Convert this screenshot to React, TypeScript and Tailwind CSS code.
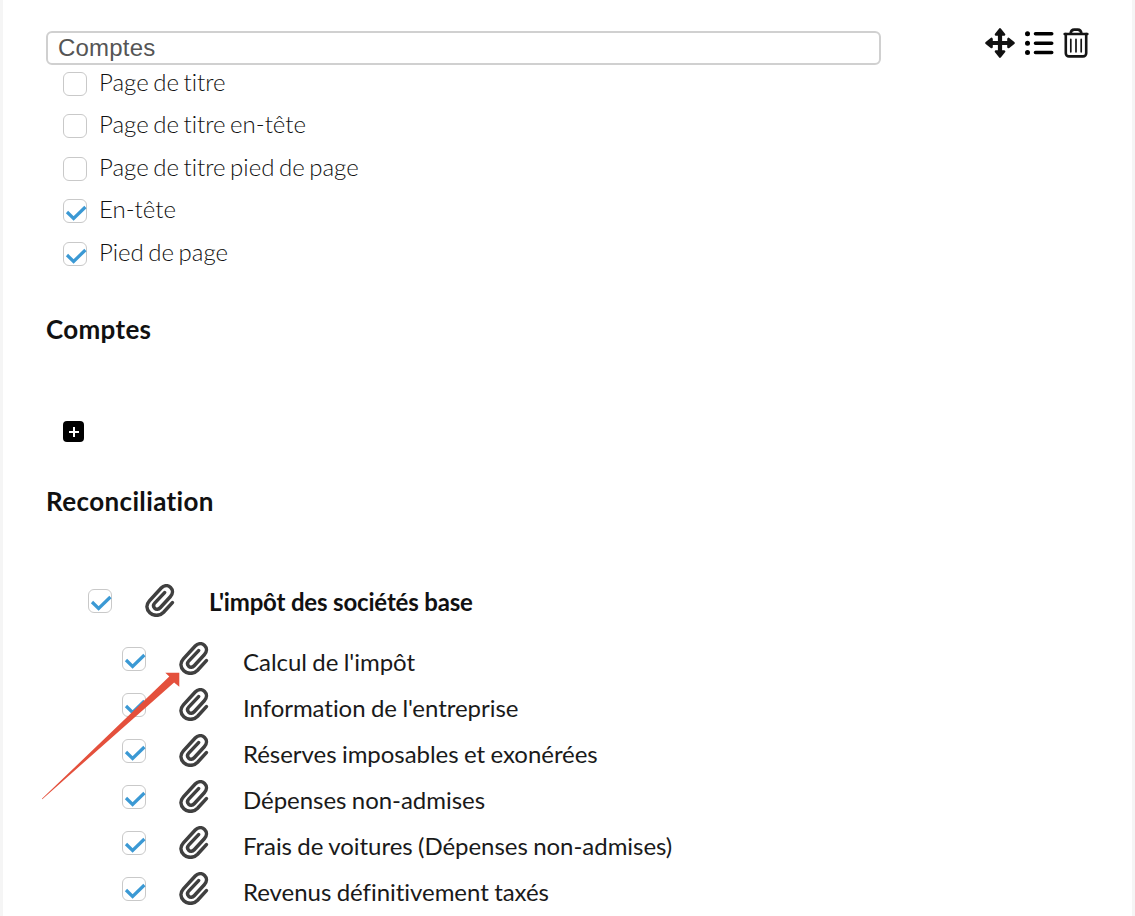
import clsx from "clsx"

const pageOptions = [
  { label: "Page de titre", checked: false },
  { label: "Page de titre en-tête", checked: false },
  { label: "Page de titre pied de page", checked: false },
  { label: "En-tête", checked: true },
  { label: "Pied de page", checked: true },
]

const reconciliationItems = [
  "Calcul de l'impôt",
  "Information de l'entreprise",
  "Réserves imposables et exonérées",
  "Dépenses non-admises",
  "Frais de voitures (Dépenses non-admises)",
  "Revenus définitivement taxés",
]

function Checkbox({ checked }: { checked: boolean }) {
  return (
    <span className="block size-6 shrink-0 rounded-[6px] border-[1.5px] border-[#c9c9c9] bg-white">
      {checked && (
        <svg viewBox="0 0 24 24" className="-ml-px -mt-px size-6" fill="none" stroke="#3b99d4" strokeWidth="3.2">
          <path d="M4 13 10.6 19.4 22.4 8" />
        </svg>
      )}
    </span>
  )
}

function PaperclipIcon() {
  return (
    <svg viewBox="0 0 30 33" className="h-[33px] w-[30px] shrink-0" fill="none" stroke="#404040" strokeWidth="3.5" strokeLinecap="round">
      <path d="M27.4 18.6 18.6 28.3C14.6 32.4 8.4 32.2 4.8 28.7 1.2 25.2 1 20.6 4.4 16.8L16.2 4C19 1.1 23 .9 25.6 3.4 28.2 5.9 28 9.8 25.3 12.7L15.2 23.8C13.5 25.6 11.2 25.7 9.7 24.2 8.2 22.7 8.3 20.6 9.9 18.9L19.6 8.6" />
    </svg>
  )
}

function MoveIcon() {
  return (
    <svg viewBox="0 0 30 30" className="size-[30px]" fill="#111" stroke="#111" strokeLinejoin="round">
      <path d="M15 4v22M4 15h22" strokeWidth="4.2" />
      <path d="m15 1.5 4 5h-8zM15 28.5l4-5h-8zM1.5 15l5-4v8zM28.5 15l-5-4v8z" strokeWidth="2.6" />
    </svg>
  )
}

function ListIcon() {
  return (
    <svg viewBox="0 0 30 24" className="h-6 w-[30px]" stroke="#000" strokeLinecap="round">
      <path d="M3.5 2.8h.01M3.5 12.2h.01M3.5 21.5h.01" strokeWidth="5" />
      <path d="M11.5 2.8h16.2M11.5 12.2h16.2M11.5 21.5h16.2" strokeWidth="3.6" />
    </svg>
  )
}

function TrashIcon() {
  return (
    <svg viewBox="0 0 26 30" className="h-[30px] w-[26px]" fill="none" stroke="#151515" strokeLinecap="round">
      <path d="M1.6 6h22.8" strokeWidth="2.4" />
      <path d="M2.8 6v19.2a3.2 3.2 0 0 0 3.2 3.2h14a3.2 3.2 0 0 0 3.2-3.2V6" strokeWidth="2.6" />
      <path d="M7.6 5.4C7.9 2.8 9.4 1.6 11.2 1.6h3.6c1.8 0 3.3 1.2 3.6 3.8" strokeWidth="2.6" />
      <path d="M7.8 11.4v12.4M13 11.4v12.4M18.2 11.4v12.4" strokeWidth="1.7" />
    </svg>
  )
}

function ReconciliationRow({ label, parent = false }: { label: string; parent?: boolean }) {
  return (
    <div className={clsx("flex h-[46px] items-center", parent ? "pl-[42px]" : "pl-[76px]")}>
      <Checkbox checked />
      <span className="ml-[33px] block">
        <PaperclipIcon />
      </span>
      <span
        className={clsx(
          "ml-[34px] whitespace-nowrap text-[24px]",
          parent ? "pt-[3px] font-bold tracking-[-0.17px] text-[#111]" : "pt-[7px] tracking-[-0.04px] text-[#1a1a1a] [word-spacing:-0.7px]",
        )}
      >
        {label}
      </span>
    </div>
  )
}

// Arrow drawn over the list, pointing at the first paperclip
function Pointer() {
  return (
    <svg viewBox="0 0 140 130" className="absolute left-[38px] top-[671px] h-[130px] w-[140px]" fill="#e4503c">
      <path d="M.9 127.8 128.3 5.6 124.3 1.7h14v14l-5.2-4.3L1.3 128.2Z" />
    </svg>
  )
}

export default function App() {
  return (
    <div className="relative h-[916px] w-[1135px] overflow-hidden border-x-[3px] border-[#f5f5f5] bg-white font-['Lato',sans-serif] leading-8 [font-variant-ligatures:none]">
      <div className="flex flex-col px-[43px] pt-[28px]">
        <div className="flex h-[36px] items-start justify-between">
          <div className="mt-[3px] flex h-[34px] w-[835px] shrink-0 items-center rounded-[6px] border-2 border-[#d0d0d0] pl-[10px] font-['Liberation_Sans',sans-serif] text-[24px] tracking-[0.2px] text-[#555]">
            Comptes
          </div>
          <div className="flex items-center">
            <MoveIcon />
            <span className="ml-[9px] mr-[9px]">
              <ListIcon />
            </span>
            <TrashIcon />
          </div>
        </div>

        <div className="flex flex-col pl-[17px] pt-[7.5px]">
          {pageOptions.map((option) => (
            <label key={option.label} className="flex h-[42.5px] items-start">
              <Checkbox checked={option.checked} />
              <span className="-mt-[6px] ml-3 text-[24px] font-light text-[#111] [word-spacing:-2px]">{option.label}</span>
            </label>
          ))}
        </div>

        <h2 className="mt-[28.5px] text-[26px] font-bold tracking-[0.32px] text-[#111]">Comptes</h2>

        <div className="mt-[76.5px] pl-[17px]">
          <button className="flex size-[21px] items-center justify-center rounded-[4px] bg-black">
            <svg viewBox="0 0 12 12" className="size-3" stroke="#fff" strokeWidth="2">
              <path d="M6 1v10M1 6h10" />
            </svg>
          </button>
        </div>

        <h2 className="mt-[43px] text-[26px] font-bold tracking-[0.37px] text-[#111]">Reconciliation</h2>

        <div className="mt-[60.5px] flex flex-col">
          <ReconciliationRow label="L'impôt des sociétés base" parent />
          <div className="mt-3 flex flex-col">
            {reconciliationItems.map((item) => (
              <ReconciliationRow key={item} label={item} />
            ))}
          </div>
        </div>
      </div>
      <Pointer />
    </div>
  )
}
